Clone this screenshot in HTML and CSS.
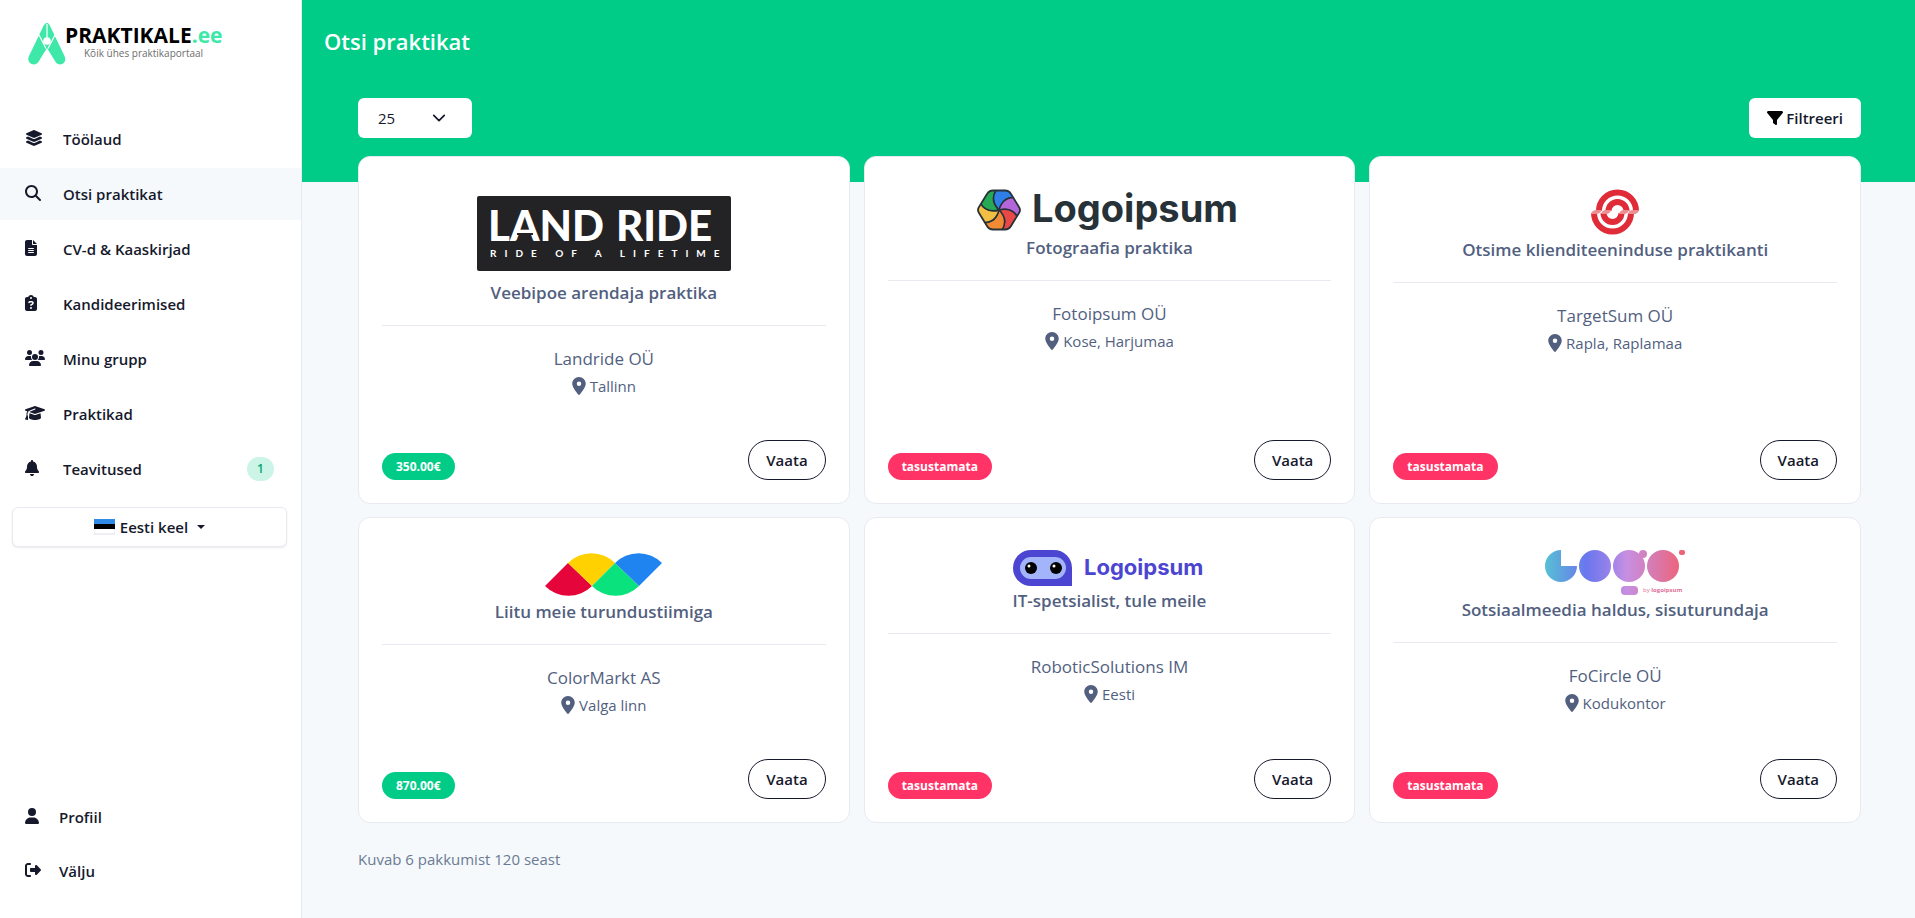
FILE: index.html
```
<!DOCTYPE html>
<html lang="et">
<head>
    <meta charset="UTF-8">
    <meta name="viewport" content="width=device-width, initial-scale=1.0">
    <title>Otsi praktikat</title>
    <link rel="stylesheet" href="styles.css">
</head>
<body>
    <!-- Icons -->
    <svg class="sprite" aria-hidden="true">
        <symbol id="i-pin" viewBox="0 0 384 512"><path d="M215.7 499.2C267 435 384 279.4 384 192C384 86 298 0 192 0S0 86 0 192c0 87.4 117 243 168.3 307.2c12.3 15.3 35.1 15.3 47.4 0zM192 128a64 64 0 1 1 0 128 64 64 0 1 1 0-128z"/></symbol>
    </svg>

    <aside class="sidebar">
        <a href="#" class="brand" aria-label="Praktikale.ee">
            <svg width="210" height="44" viewBox="0 0 210 44">
                <path d="M19 1C20.500 1 22 3 23 6L36.500 34C40 42 30 45.500 27 39L19 26L11 39C8 45.500 -2.500 42 1 34L14.500 6C15.500 3 17.500 1 19 1Z" fill="#3ee8a9"/>
                <path d="M19 2V17M11 13L18 26.500M27 13L20 26.500" stroke="#fff" stroke-width="1.200" fill="none"/>
                <circle cx="19" cy="19" r="3.800" fill="#fff"/>
                <text x="37" y="21" class="brand-name">PRAKTIKALE<tspan class="brand-tld">.ee</tspan></text>
                <text x="56" y="35" class="brand-sub">Kõik ühes praktikaportaal</text>
            </svg>
        </a>

        <nav class="menu">
            <a href="#" class="menu-item">
                <span class="menu-icon"><svg height="16" width="18" viewBox="0 0 576 512"><path d="M264.500 5.200c14.900-6.900 32.100-6.900 47 0l218.600 101c8.500 3.900 13.900 12.400 13.900 21.800s-5.400 17.900-13.900 21.800l-218.600 101c-14.900 6.900-32.100 6.900-47 0L45.900 149.800C37.400 145.800 32 137.300 32 128s5.400-17.900 13.900-21.800L264.500 5.200zM476.900 209.600l53.200 24.600c8.500 3.900 13.900 12.400 13.900 21.800s-5.400 17.900-13.900 21.800l-218.600 101c-14.900 6.900-32.100 6.900-47 0L45.900 277.800C37.400 273.800 32 265.300 32 256s5.400-17.900 13.900-21.800l53.200-24.600 152 70.200c23.400 10.800 50.400 10.800 73.800 0l152-70.200zm-152 198.200l152-70.200 53.200 24.600c8.500 3.900 13.900 12.400 13.900 21.800s-5.400 17.900-13.900 21.800l-218.600 101c-14.900 6.900-32.100 6.900-47 0L45.900 405.800C37.400 401.800 32 393.300 32 384s5.400-17.900 13.900-21.800l53.200-24.600 152 70.200c23.400 10.800 50.400 10.800 73.800 0z"/></svg></span>
                Töölaud
            </a>
            <a href="#" class="menu-item active">
                <span class="menu-icon"><svg height="16" width="16" viewBox="0 0 512 512"><path d="M416 208c0 45.900-14.900 88.300-40 122.700L502.600 457.400c12.500 12.500 12.500 32.800 0 45.300s-32.800 12.500-45.300 0L330.700 376c-34.400 25.200-76.800 40-122.700 40C93.100 416 0 322.900 0 208S93.100 0 208 0S416 93.100 416 208zM208 352a144 144 0 1 0 0-288 144 144 0 1 0 0 288z"/></svg></span>
                Otsi praktikat
            </a>
            <a href="#" class="menu-item">
                <span class="menu-icon"><svg height="16" width="12" viewBox="0 0 384 512"><path d="M64 0C28.700 0 0 28.700 0 64V448c0 35.300 28.700 64 64 64H320c35.300 0 64-28.700 64-64V160H256c-17.700 0-32-14.300-32-32V0H64zM256 0V128H384L256 0zM112 256H272c8.800 0 16 7.200 16 16s-7.200 16-16 16H112c-8.800 0-16-7.200-16-16s7.200-16 16-16zm0 64H272c8.800 0 16 7.200 16 16s-7.200 16-16 16H112c-8.800 0-16-7.200-16-16s7.200-16 16-16zm0 64H272c8.800 0 16 7.200 16 16s-7.200 16-16 16H112c-8.800 0-16-7.200-16-16s7.200-16 16-16z"/></svg></span>
                CV-d &amp; Kaaskirjad
            </a>
            <a href="#" class="menu-item">
                <span class="menu-icon"><svg height="16" width="12" viewBox="0 0 384 512"><path d="M192 0c-41.800 0-77.400 26.700-90.500 64H64C28.700 64 0 92.700 0 128V448c0 35.300 28.700 64 64 64H320c35.300 0 64-28.700 64-64V128c0-35.300-28.700-64-64-64H282.500C269.400 26.700 233.800 0 192 0zm0 64a32 32 0 1 1 0 64 32 32 0 1 1 0-64zM105.800 229.300c7.900-22.300 29.100-37.300 52.800-37.300h58.300c34.900 0 63.100 28.300 63.100 63.100c0 22.600-12.100 43.500-31.700 54.800L216 328.400c-.2 13-10.900 23.600-24 23.600c-13.300 0-24-10.700-24-24V314.500c0-8.600 4.600-16.500 12.100-20.800l44.300-25.400c4.700-2.700 7.600-7.700 7.600-13.100c0-8.400-6.800-15.100-15.100-15.100H158.600c-3.400 0-6.400 2.100-7.500 5.300l-.4 1.200c-4.400 12.500-18.200 19-30.600 14.600s-19-18.200-14.600-30.600l.4-1.200zM160 416a32 32 0 1 1 64 0 32 32 0 1 1 -64 0z"/></svg></span>
                Kandideerimised
            </a>
            <a href="#" class="menu-item">
                <span class="menu-icon"><svg height="16" width="20" viewBox="0 0 640 512"><path d="M144 0a80 80 0 1 1 0 160A80 80 0 1 1 144 0zM512 0a80 80 0 1 1 0 160A80 80 0 1 1 512 0zM0 298.700C0 239.800 47.800 192 106.700 192h42.700c15.900 0 31 3.500 44.600 9.700c-1.300 7.200-1.900 14.700-1.900 22.300c0 38.200 16.800 72.500 43.300 96c-.2 0-.4 0-.7 0H21.300C9.600 320 0 310.400 0 298.700zM405.300 320c-.2 0-.4 0-.7 0c26.600-23.500 43.300-57.800 43.300-96c0-7.600-.7-15-1.900-22.300c13.600-6.300 28.700-9.700 44.600-9.700h42.700C592.200 192 640 239.800 640 298.700c0 11.800-9.600 21.300-21.300 21.300H405.300zM224 224a96 96 0 1 1 192 0 96 96 0 1 1 -192 0zM128 485.300C128 411.700 187.700 352 261.300 352H378.700C452.300 352 512 411.700 512 485.300c0 14.700-11.900 26.700-26.700 26.700H154.700c-14.700 0-26.700-11.900-26.700-26.700z"/></svg></span>
                Minu grupp
            </a>
            <a href="#" class="menu-item">
                <span class="menu-icon"><svg height="16" width="20" viewBox="0 0 640 512"><path d="M320 32c-8.100 0-16.100 1.400-23.700 4.100L15.800 137.400C6.300 140.900 0 149.900 0 160s6.300 19.100 15.800 22.600l57.900 20.900C57.300 229.300 48 259.800 48 291.900v28.100c0 28.400-10.800 57.700-22.300 80.800c-6.500 13-13.900 25.800-22.500 37.600C0 442.700-.9 448.300 .9 453.400s6 8.900 11.200 10.200l64 16c4.200 1.100 8.700 .3 12.400-2s6.300-6.100 7.100-10.400c8.600-42.800 4.300-81.200-2.100-108.700C90.300 344.300 86 329.800 80 316.500V291.900c0-30.200 10.200-58.700 27.900-81.500c12.900-15.500 29.600-28 49.200-35.700l157-61.700c8.200-3.200 17.500 .8 20.700 9s-.8 17.500-9 20.700l-157 61.700c-12.400 4.900-23.300 12.400-32.200 21.600l159.600 57.600c7.600 2.700 15.600 4.100 23.700 4.100s16.100-1.400 23.700-4.100L624.200 182.600c9.500-3.400 15.800-12.500 15.800-22.600s-6.300-19.100-15.800-22.600L343.700 36.100C336.100 33.400 328.100 32 320 32zM128 408c0 35.300 86 72 192 72s192-36.700 192-72L496.700 262.600 354.500 314c-11.100 4-22.800 6-34.500 6s-23.500-2-34.500-6L143.300 262.600 128 408z"/></svg></span>
                Praktikad
            </a>
            <a href="#" class="menu-item">
                <span class="menu-icon"><svg height="16" width="14" viewBox="0 0 448 512"><path d="M224 0c-17.700 0-32 14.300-32 32V51.200C119 66 64 130.600 64 208v18.800c0 47-17.300 92.400-48.500 127.600l-7.400 8.300c-8.400 9.400-10.400 22.900-5.300 34.400S19.400 416 32 416H416c12.600 0 24-7.400 29.200-18.900s3.100-25-5.300-34.400l-7.400-8.300C401.300 319.200 384 273.900 384 226.800V208c0-77.400-55-142-128-156.800V32c0-17.700-14.300-32-32-32zm45.300 493.300c12-12 18.700-28.300 18.700-45.300H224 160c0 17 6.700 33.300 18.700 45.300s28.300 18.700 45.300 18.700s33.300-6.700 45.300-18.700z"/></svg></span>
                Teavitused
                <span class="count">1</span>
            </a>
        </nav>

        <button type="button" class="language">
            <svg width="21" height="16" viewBox="0 0 21 16"><path d="M0 1h21v14H0z" fill="#fff" stroke="#dcdfe6"/><path d="M0 0h21v5H0z" fill="#2f8be6"/><path d="M0 5h21v5H0z" fill="#000"/></svg>
            Eesti keel
            <span class="caret"></span>
        </button>

        <nav class="menu menu-bottom">
            <a href="#" class="menu-item">
                <span class="menu-icon"><svg height="16" width="14" viewBox="0 0 448 512"><path d="M224 256A128 128 0 1 0 224 0a128 128 0 1 0 0 256zm-45.700 48C79.800 304 0 383.800 0 482.300C0 498.700 13.300 512 29.700 512H418.300c16.400 0 29.700-13.300 29.700-29.700C448 383.800 368.200 304 269.700 304H178.300z"/></svg></span>
                Profiil
            </a>
            <a href="#" class="menu-item">
                <span class="menu-icon"><svg height="16" width="16" viewBox="0 0 512 512"><path d="M377.900 105.900L500.700 228.700c7.200 7.200 11.300 17.100 11.300 27.300s-4.100 20.100-11.300 27.300L377.900 406.100c-6.400 6.400-15 9.900-24 9.900c-18.700 0-33.900-15.200-33.900-33.900l0-62.100-128 0c-17.700 0-32-14.300-32-32l0-64c0-17.700 14.300-32 32-32l128 0 0-62.100c0-18.700 15.200-33.900 33.900-33.900c9 0 17.600 3.600 24 9.900zM160 96L96 96c-17.700 0-32 14.300-32 32l0 256c0 17.700 14.300 32 32 32l64 0c17.700 0 32 14.300 32 32s-14.300 32-32 32l-64 0c-53 0-96-43-96-96L0 128C0 75 43 32 96 32l64 0c17.700 0 32 14.300 32 32s-14.300 32-32 32z"/></svg></span>
                Välju
            </a>
        </nav>
    </aside>

    <main class="main">
        <header class="header">
            <h1>Otsi praktikat</h1>
            <div class="toolbar">
                <select class="page-size" aria-label="Pakkumisi lehel">
                    <option>25</option>
                    <option>50</option>
                    <option>100</option>
                </select>
                <button type="button" class="filter">
                    <svg height="16" width="16" viewBox="0 0 512 512"><path d="M3.900 54.900C10.500 40.900 24.500 32 40 32H472c15.500 0 29.500 8.900 36.100 22.900s4.600 30.500-5.200 42.500L320 320.900V448c0 12.100-6.800 23.200-17.700 28.600s-23.800 4.300-33.500-3l-64-48c-8.100-6-12.800-15.500-12.800-25.600V320.900L9 97.300C-.7 85.400-2.800 68.800 3.900 54.900z"/></svg>
                    Filtreeri
                </button>
            </div>
        </header>

        <section class="cards">
            <article class="card">
                <div class="logo">
                    <svg width="254" height="90" viewBox="0 -7 254 90">
                        <rect width="254" height="75" rx="2" fill="#232325"/>
                        <text x="11" y="45" class="land-name">LAND</text>
                        <text x="139" y="45" class="land-name">RIDE</text>
                        <path d="M40 38H56" stroke="#232325" stroke-width="2" fill="none"/>
                        <text x="13" y="61" class="land-sub">RIDE OF A LIFETIME</text>
                    </svg>
                </div>
                <h2>Veebipoe arendaja praktika</h2>
                <hr>
                <p class="company">Landride OÜ</p>
                <p class="place"><svg width="14" height="18"><use href="#i-pin"/></svg>Tallinn</p>
                <div class="card-footer">
                    <span class="badge paid">350.00€</span>
                    <button type="button" class="view">Vaata</button>
                </div>
            </article>

            <article class="card">
                <div class="logo">
                    <svg width="264" height="45" viewBox="0 0 264 45">
                        <defs>
                            <path id="hex" d="M-6-19.500H6Q10-19.500 12-16L20-3Q22 0 20 3L12 16Q10 19.500 6 19.500H-6Q-10 19.500-12 16L-20 3Q-22 0-20-3L-12-16Q-10-19.500-6-19.500Z"/>
                            <path id="petal" d="M0 0C-5-5-8-12-3-20L8-26L15.800-12.600C6.400-12.900 1.800-6.800 0 0Z"/>
                            <clipPath id="hex-clip"><use href="#hex"/></clipPath>
                        </defs>
                        <g transform="translate(22 21)">
                            <g clip-path="url(#hex-clip)" stroke="#263238" stroke-width="1.500">
                                <use href="#petal" fill="#2f7fe8"/>
                                <use href="#petal" fill="#b366d9" transform="rotate(60)"/>
                                <use href="#petal" fill="#e84848" transform="rotate(120)"/>
                                <use href="#petal" fill="#f08a35" transform="rotate(180)"/>
                                <use href="#petal" fill="#f3bf42" transform="rotate(240)"/>
                                <use href="#petal" fill="#25a955" transform="rotate(300)"/>
                            </g>
                            <use href="#hex" fill="none" stroke="#263238" stroke-width="1.800"/>
                        </g>
                        <text x="55" y="33" class="ipsum-name">Logoipsum</text>
                    </svg>
                </div>
                <h2>Fotograafia praktika</h2>
                <hr>
                <p class="company">Fotoipsum OÜ</p>
                <p class="place"><svg width="14" height="18"><use href="#i-pin"/></svg>Kose, Harjumaa</p>
                <div class="card-footer">
                    <span class="badge unpaid">tasustamata</span>
                    <button type="button" class="view">Vaata</button>
                </div>
            </article>

            <article class="card">
                <div class="logo">
                    <svg width="48" height="47" viewBox="0 0 48 47">
                        <g fill="none" stroke="#e02b38" stroke-width="6">
                            <path d="M8 22A18.500 18.500 0 0 1 45 22M17.500 22A9 9 0 0 1 35.500 22"/>
                            <path d="M3 24A18.500 18.500 0 0 0 40 24M12.500 24A9 9 0 0 0 30.500 24"/>
                        </g>
                        <g fill="#f08d93">
                            <path d="M0 25Q1 21 6 21H11Q9 25 5 25ZM10 25Q11 21 15 21H20Q19 25 15 25ZM28 25Q29 21 33 21H38Q37 25 33 25ZM37 25Q38 21 42 21H48Q47 25 43 25Z"/>
                        </g>
                    </svg>
                </div>
                <h2>Otsime klienditeeninduse praktikanti</h2>
                <hr>
                <p class="company">TargetSum OÜ</p>
                <p class="place"><svg width="14" height="18"><use href="#i-pin"/></svg>Rapla, Raplamaa</p>
                <div class="card-footer">
                    <span class="badge unpaid">tasustamata</span>
                    <button type="button" class="view">Vaata</button>
                </div>
            </article>

            <article class="card">
                <div class="logo">
                    <svg width="118" height="48" viewBox="0 -3 118 48">
                        <path d="M0 33L23 10L47 33A33 33 0 0 1 0 33Z" fill="#e5053b"/>
                        <path d="M23 10A33 33 0 0 1 70 10L47 33Z" fill="#ffd100"/>
                        <path d="M47 33L70 10L94 33A33 33 0 0 1 47 33Z" fill="#0ae27e"/>
                        <path d="M70 10A33 33 0 0 1 117 10L94 33Z" fill="#1f84ef"/>
                    </svg>
                </div>
                <h2>Liitu meie turundustiimiga</h2>
                <hr>
                <p class="company">ColorMarkt AS</p>
                <p class="place"><svg width="14" height="18"><use href="#i-pin"/></svg>Valga linn</p>
                <div class="card-footer">
                    <span class="badge paid">870.00€</span>
                    <button type="button" class="view">Vaata</button>
                </div>
            </article>

            <article class="card">
                <div class="logo">
                    <svg width="192" height="37" viewBox="0 0 192 37">
                        <path d="M18 0H41A18 18 0 0 1 59 18V36H18A18 18 0 0 1 18 0Z" fill="#4b45d1"/>
                        <rect x="7" y="7" width="46" height="22" rx="11" fill="#a3b4fb"/>
                        <circle cx="18" cy="18" r="6"/>
                        <circle cx="43" cy="18" r="6"/>
                        <circle cx="16" cy="16" r="1.500" fill="#fff"/>
                        <circle cx="41" cy="16" r="1.500" fill="#fff"/>
                        <text x="71" y="25" class="robot-name">Logoipsum</text>
                    </svg>
                </div>
                <h2>IT-spetsialist, tule meile</h2>
                <hr>
                <p class="company">RoboticSolutions IM</p>
                <p class="place"><svg width="14" height="18"><use href="#i-pin"/></svg>Eesti</p>
                <div class="card-footer">
                    <span class="badge unpaid">tasustamata</span>
                    <button type="button" class="view">Vaata</button>
                </div>
            </article>

            <article class="card">
                <div class="logo">
                    <svg width="140" height="46" viewBox="0 0 140 46">
                        <defs>
                            <linearGradient id="logo-fade" gradientUnits="userSpaceOnUse" x1="0" y1="0" x2="136" y2="0">
                                <stop offset="0" stop-color="#56c0d4"/>
                                <stop offset=".3" stop-color="#6a77ee"/>
                                <stop offset=".44" stop-color="#8d7fea"/>
                                <stop offset=".6" stop-color="#c78fe2"/>
                                <stop offset=".8" stop-color="#d77ab0"/>
                                <stop offset="1" stop-color="#ee6378"/>
                            </linearGradient>
                        </defs>
                        <g fill="url(#logo-fade)">
                            <path d="M16 0V16H32A16 16 0 1 1 16 0Z"/>
                            <circle cx="50" cy="16" r="16"/>
                            <circle cx="84" cy="16" r="16"/>
                            <circle cx="98" cy="4" r="4"/>
                            <circle cx="118" cy="16" r="16"/>
                            <rect x="134" y="0" width="6" height="5" rx="2"/>
                            <rect x="76" y="36" width="17" height="9" rx="4"/>
                        </g>
                        <text x="98" y="42" class="by-logo">by <tspan font-weight="700">logoipsum</tspan></text>
                    </svg>
                </div>
                <h2>Sotsiaalmeedia haldus, sisuturundaja</h2>
                <hr>
                <p class="company">FoCircle OÜ</p>
                <p class="place"><svg width="14" height="18"><use href="#i-pin"/></svg>Kodukontor</p>
                <div class="card-footer">
                    <span class="badge unpaid">tasustamata</span>
                    <button type="button" class="view">Vaata</button>
                </div>
            </article>
        </section>

        <p class="summary">Kuvab 6 pakkumist 120 seast</p>
    </main>
</body>
</html>
```
FILE: styles.css
```
* {
    box-sizing: border-box;
}
body {
    display: flex;
    min-height: 100vh;
    margin: 0;
    font-family: "Open Sans", "Noto Sans", sans-serif;
    font-size: 15px;
    line-height: 24px;
    color: #16192c;
    background-color: #f5f9fc;
}
h1, h2, p {
    margin: 0;
}
button, select {
    font-family: inherit;
    font-size: 15px;
    color: #16192c;
    cursor: pointer;
}
svg {
    display: block;
    flex-shrink: 0;
}
.sprite {
    position: absolute;
    width: 0;
    height: 0;
}

/* Sidebar */
.sidebar {
    display: flex;
    flex-direction: column;
    flex-shrink: 0;
    width: 302px;
    padding-bottom: 21px;
    background: #fff;
    border-right: 1px solid #e7eaf0;
}
.brand {
    padding: 22px 28px 47px;
}
.brand-name {
    font-size: 21px;
    font-weight: 700;
}
.brand-tld {
    fill: #3ee8a9;
}
.brand-sub {
    font-size: 10px;
    fill: #6d6d6d;
}
.menu {
    display: flex;
    flex-direction: column;
    gap: 3px;
}
.menu-item {
    display: flex;
    align-items: center;
    height: 52px;
    padding: 0 27px 0 25px;
    font-weight: 600;
    color: #16192c;
    text-decoration: none;
}
.menu-item:hover, .menu-item.active {
    background: #f5f9fc;
}
.menu-icon {
    width: 38px;
    padding-bottom: 2px;
    fill: #16192c;
}
.menu-bottom {
    gap: 2px;
    margin-top: auto;
}
.menu-bottom .menu-icon {
    width: 34px;
}
.count {
    width: 27px;
    margin-left: auto;
    border-radius: 13px;
    font-size: 12px;
    text-align: center;
    color: #00a86f;
    background: #ccf5e7;
}
.language {
    display: flex;
    align-items: center;
    justify-content: center;
    gap: 5px;
    height: 40px;
    margin: 12px 14px 0 12px;
    font-weight: 600;
    background: #fff;
    border: 1px solid #e7eaf0;
    border-radius: 6px;
    box-shadow: 0 1px 2px rgba(50, 50, 71, 0.1);
}
.caret {
    margin-left: 4px;
    border: 4px solid transparent;
    border-top-color: #16192c;
    border-bottom: 0;
}

/* Page */
.main {
    flex: 1;
}
.header {
    height: 182px;
    padding: 25px 54px 0 56px;
    background: #00cc88;
}
.header h1 {
    margin: 0 0 41px -34px;
    font-size: 22px;
    line-height: 32px;
    font-weight: 600;
    color: #fff;
}
.toolbar {
    display: flex;
    justify-content: space-between;
}
.page-size {
    width: 114px;
    height: 40px;
    padding: 0 20px;
    border: 0;
    border-radius: 6px;
    appearance: none;
    background: #fff url("data:image/svg+xml,%3Csvg xmlns='http://www.w3.org/2000/svg' viewBox='0 0 16 16'%3E%3Cpath fill='none' stroke='%2316192c' stroke-linecap='round' stroke-linejoin='round' stroke-width='2' d='M2 5l6 6 6-6'/%3E%3C/svg%3E") no-repeat right 26px center / 14px 14px;
}
.filter {
    display: flex;
    align-items: center;
    gap: 3px;
    height: 40px;
    padding: 0 18px;
    font-weight: 600;
    border: 0;
    border-radius: 6px;
    background: #fff;
}
.cards {
    display: grid;
    grid-template-columns: repeat(3, 1fr);
    gap: 13px 14px;
    margin: -26px 54px 0 56px;
}
.card {
    display: flex;
    flex-direction: column;
    padding: 23px;
    text-align: center;
    color: #525f7f;
    background: #fff;
    border: 1px solid #e7eaf0;
    border-radius: 12px;
}
.logo {
    display: flex;
    justify-content: center;
    padding-top: 9px;
}
.card h2 {
    font-size: 17px;
    line-height: 28px;
    font-weight: 600;
}
.card hr {
    width: 100%;
    height: 1px;
    margin: 18px 0 20px;
    border: 0;
    background: #e7eaf0;
}
.company {
    margin-bottom: 2px;
    font-size: 17px;
    line-height: 26px;
}
.place {
    display: flex;
    align-items: center;
    justify-content: center;
    gap: 4px;
}
.place svg {
    fill: #525f7f;
}
.card-footer {
    display: flex;
    align-items: flex-end;
    justify-content: space-between;
    margin-top: auto;
    padding-top: 42px;
}
.badge {
    padding: 0 14px;
    border-radius: 14px;
    font-size: 12px;
    line-height: 27px;
    font-weight: 700;
    color: #fff;
}
.paid {
    background: #00cc88;
}
.unpaid {
    background: #ff3366;
}
.view {
    height: 40px;
    padding: 0 17px;
    font-weight: 600;
    background: #fff;
    border: 1px solid #16192c;
    border-radius: 20px;
}
.summary {
    margin: 24px 56px;
    color: #6b7b93;
}

/* Company logos */
.land-name {
    font-family: Lato, sans-serif;
    font-size: 42px;
    font-weight: 900;
    fill: #fff;
}
.land-sub {
    font-family: Lato, sans-serif;
    font-size: 10px;
    font-weight: 700;
    letter-spacing: 8px;
    fill: #fff;
}
.ipsum-name {
    font-family: Inter, sans-serif;
    font-size: 38px;
    font-weight: 700;
    fill: #263238;
}
.robot-name {
    font-family: Inter, sans-serif;
    font-size: 22px;
    font-weight: 700;
    fill: #4b45d1;
}
.by-logo {
    font-size: 6px;
    fill: #e0709a;
}
```
